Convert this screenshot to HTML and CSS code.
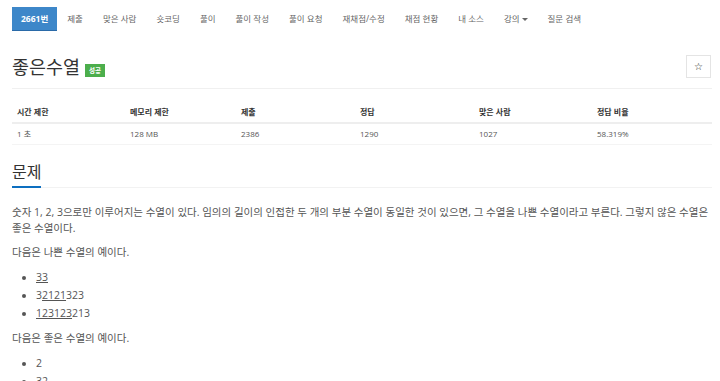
FILE: index.html
```html
<!DOCTYPE html>
<html lang="ko">
<head>
    <meta charset="UTF-8">
    <title>2661번: 좋은수열</title>
    <link rel="stylesheet" href="styles.css">
</head>
<body>
    <!-- 문제 메뉴 -->
    <ul class="problem-menu">
        <li class="active"><a href="#">2661번</a></li>
        <li><a href="#">제출</a></li>
        <li><a href="#">맞은 사람</a></li>
        <li><a href="#">숏코딩</a></li>
        <li><a href="#">풀이</a></li>
        <li><a href="#">풀이 작성</a></li>
        <li><a href="#">풀이 요청</a></li>
        <li><a href="#">재채점/수정</a></li>
        <li><a href="#">채점 현황</a></li>
        <li><a href="#">내 소스</a></li>
        <li><a href="#">강의<span class="caret"></span></a></li>
        <li><a href="#">질문 검색</a></li>
    </ul>

    <div class="page-header">
        <h1><span class="title">좋은수열</span> <span class="label-success">성공</span></h1>
        <button class="btn-star">&#9734;</button>
    </div>

    <table class="problem-info">
        <thead>
            <tr>
                <th class="c1">시간 제한</th>
                <th class="c2">메모리 제한</th>
                <th class="c3">제출</th>
                <th class="c4">정답</th>
                <th class="c5">맞은 사람</th>
                <th>정답 비율</th>
            </tr>
        </thead>
        <tbody>
            <tr>
                <td>1 초 </td>
                <td>128 MB</td>
                <td>2386</td>
                <td>1290</td>
                <td>1027</td>
                <td>58.319%</td>
            </tr>
        </tbody>
    </table>

    <section class="problem-section">
        <div class="headline"><h2>문제</h2></div>
        <div class="problem-text">
            <p>숫자 1, 2, 3으로만 이루어지는 수열이 있다. 임의의 길이의 인접한 두 개의 부분 수열이 동일한 것이 있으면, 그 수열을 나쁜 수열이라고 부른다. 그렇지 않은 수열은 좋은 수열이다.</p>
            <p>다음은 나쁜 수열의 예이다.</p>
            <ul>
                <li><u>33</u></li>
                <li>3<u>2121</u>323</li>
                <li><u>123123</u>213</li>
            </ul>
            <p>다음은 좋은 수열의 예이다.</p>
            <ul>
                <li>2</li>
                <li>32</li>
            </ul>
        </div>
    </section>
</body>
</html>
```

FILE: styles.css
```css
body {
    font-family: "Open Sans", "Noto Sans CJK KR", sans-serif;
    color: #555;
    background: #fff;
    margin: 0;
    padding: 0 8px 0 12px;
    overflow: hidden;
}

/* 문제 메뉴 */
.problem-menu {
    list-style: none;
    margin: 7px 0 0;
    padding: 0;
    display: flex;
    height: 24px;
}
.problem-menu li a {
    display: block;
    height: 24px;
    line-height: 24px;
    padding: 0 10px;
    font-size: 8.5px;
    color: #666;
    text-decoration: none;
}
.problem-menu li.active a {
    background: #3d87c9;
    color: #fff;
    font-weight: bold;
    border-bottom: 1px solid #2a6aa8;
    height: 23px;
    padding: 0 9px;
}
.caret {
    display: inline-block;
    width: 0;
    height: 0;
    margin-left: 2px;
    vertical-align: middle;
    border-top: 3px solid #666;
    border-left: 3px solid transparent;
    border-right: 3px solid transparent;
}

/* 제목 */
.page-header {
    display: flex;
    justify-content: space-between;
    align-items: flex-start;
    margin-top: 25px;
    padding-bottom: 10px;
    border-bottom: 1px solid #f0f0f0;
}
.page-header h1 {
    margin: 0;
    font-weight: normal;
    font-size: 18.5px;
    line-height: 22px;
    color: #333;
}
.label-success {
    display: inline-block;
    background: #4cae4c;
    color: #fff;
    font-size: 6.5px;
    font-weight: bold;
    padding: 0 4px;
    line-height: 13px;
    vertical-align: 1px;
}
.btn-star {
    width: 25px;
    height: 23px;
    margin: -1px 1px 0 0;
    padding: 0;
    background: #fff;
    border: 1px solid #e4e4e4;
    font-size: 10px;
    color: #222;
    font-family: "DejaVu Sans", sans-serif;
}

/* 문제 정보 표 */
.problem-info {
    width: 100%;
    border-collapse: collapse;
    margin-top: 12px;
    font-size: 8px;
    table-layout: fixed;
}
.problem-info th {
    text-align: left;
    font-weight: bold;
    color: #333;
    padding: 5px 5px;
    height: 11px;
    border-bottom: 2px solid #eee;
}
.problem-info td {
    padding: 4px 5px 5px;
    color: #555;
    border-bottom: 1px solid #f4f4f4;
}
.c1 { width: 103px; }
.c2 { width: 101px; }
.c3 { width: 109px; }
.c4 { width: 109px; }
.c5 { width: 108px; }

/* 문제 본문 */
.problem-section {
    margin-top: 15px;
}
.headline {
    border-bottom: 1px solid #f2f2f2;
    margin-bottom: 16px;
}
.headline h2 {
    display: inline-block;
    margin: 0 0 -1px;
    font-size: 16px;
    font-weight: normal;
    color: #333;
    line-height: 24px;
    padding-bottom: 2px;
    border-bottom: 2px solid #0d6fc0;
}
.problem-text {
    font-size: 10.5px;
    line-height: 16px;
}
.problem-text p {
    margin: 0 0 8px;
}
.problem-text ul {
    margin: 0 0 8px;
    padding-left: 24px;
}
.problem-text li {
    line-height: 18px;
}
```
